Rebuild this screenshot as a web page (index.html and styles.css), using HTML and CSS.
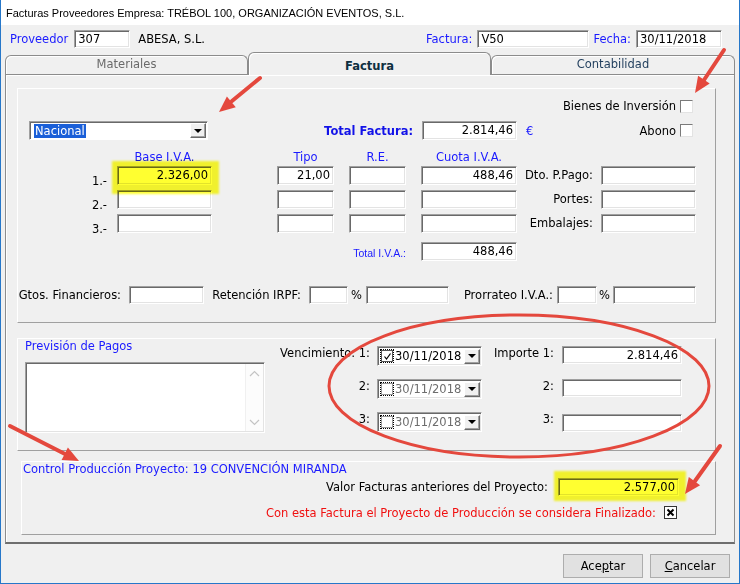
FILE: index.html
```html
<!DOCTYPE html>
<html lang="es">
<head>
    <meta charset="UTF-8">
    <title>Facturas Proveedores</title>
    <link rel="stylesheet" href="styles.css">
</head>
<body>

<div class="window">
    <div class="titlebar">Facturas Proveedores Empresa: TRÉBOL 100, ORGANIZACIÓN EVENTOS, S.L.</div>

    <div class="client">
        <!-- Cabecera: proveedor, factura, fecha -->
        <div class="head-row">
            <span class="blue">Proveedor</span>
            <div class="field f-prov">307</div>
            <span class="prov-name">ABESA, S.L.</span>
            <span class="blue push">Factura:</span>
            <div class="field f-fact">V50</div>
            <span class="blue f-fecha-l">Fecha:</span>
            <div class="field f-fecha">30/11/2018</div>
        </div>

        <!-- Pestañas -->
        <div class="tabs">
            <div class="tab t-mat">Materiales</div>
            <div class="tab active">Factura</div>
            <div class="tab t-cont">Contabilidad</div>
        </div>

        <div class="panel">
            <!-- Importes -->
            <div class="group g1">
                <div class="r-bienes">
                    <span>Bienes de Inversión</span>
                    <span class="chk"></span>
                </div>

                <div class="r-total">
                    <div class="combo">
                        <span class="sel">Nacional</span>
                        <span class="drop"><i class="tri"></i></span>
                    </div>
                    <span class="lbl-total">Total Factura:</span>
                    <div class="field h19 right tf-field">2.814,46</div>
                    <span class="euro">€</span>
                    <span class="abono">Abono</span>
                    <span class="chk"></span>
                </div>

                <div class="heads">
                    <span class="c-base">Base I.V.A.</span>
                    <span class="c-tipo">Tipo</span>
                    <span class="c-re">R.E.</span>
                    <span class="c-cuota">Cuota I.V.A.</span>
                </div>

                <div class="iva-row">
                    <span class="num">1.-</span>
                    <div class="field h19 right c-base">2.326,00</div>
                    <div class="field h19 right c-tipo">21,00</div>
                    <div class="field h19 c-re"></div>
                    <div class="field h19 right c-cuota">488,46</div>
                    <span class="side">Dto. P.Pago:</span>
                    <div class="field h19 c-side"></div>
                </div>
                <div class="iva-row">
                    <span class="num">2.-</span>
                    <div class="field h19 c-base"></div>
                    <div class="field h19 c-tipo"></div>
                    <div class="field h19 c-re"></div>
                    <div class="field h19 c-cuota"></div>
                    <span class="side">Portes:</span>
                    <div class="field h19 c-side"></div>
                </div>
                <div class="iva-row">
                    <span class="num">3.-</span>
                    <div class="field h19 c-base"></div>
                    <div class="field h19 c-tipo"></div>
                    <div class="field h19 c-re"></div>
                    <div class="field h19 c-cuota"></div>
                    <span class="side">Embalajes:</span>
                    <div class="field h19 c-side"></div>
                </div>

                <div class="r-totiva">
                    <span class="tot-iva">Total I.V.A.:</span>
                    <div class="field h19 right c-cuota">488,46</div>
                </div>

                <div class="r-gastos">
                    <span class="gf-l">Gtos. Financieros:</span>
                    <div class="field f-gf"></div>
                    <span class="irpf-l">Retención IRPF:</span>
                    <div class="field f-irpf"></div>
                    <span class="pct">%</span>
                    <div class="field f-wide"></div>
                    <span class="prorr-l">Prorrateo I.V.A.:</span>
                    <div class="field f-prorr"></div>
                    <span class="pct2">%</span>
                    <div class="field f-wide"></div>
                </div>
            </div>

            <!-- Previsión de pagos -->
            <div class="group g2">
                <div class="prev">
                    <div class="blue prev-title">Previsión de Pagos</div>
                    <div class="memo">
                        <div class="memo-bar">
                            <svg width="11" height="7" viewBox="0 0 11 7"><polyline points="1,6 5.5,1.5 10,6" fill="none" stroke="#c4c4c4" stroke-width="1.2"/></svg>
                            <svg width="11" height="7" viewBox="0 0 11 7"><polyline points="1,1 5.5,5.5 10,1" fill="none" stroke="#c4c4c4" stroke-width="1.2"/></svg>
                        </div>
                    </div>
                </div>
                <div class="venc">
                    <div class="v-row">
                        <span class="v-lbl">Vencimiento: 1:</span>
                        <div class="dtp">
                            <span class="dtp-chk">
                                <svg width="9" height="9" viewBox="0 0 9 9"><polyline points="1.5,4.5 3.5,7 7.5,1.5" fill="none" stroke="#000" stroke-width="1.2"/></svg>
                            </span>
                            <span class="dtp-val">30/11/2018</span>
                            <span class="drop"><i class="tri"></i></span>
                        </div>
                        <span class="i-lbl">Importe 1:</span>
                        <div class="field right f-imp">2.814,46</div>
                    </div>
                    <div class="v-row">
                        <span class="v-lbl">2:</span>
                        <div class="dtp off">
                            <span class="dtp-chk"></span>
                            <span class="dtp-val">30/11/2018</span>
                            <span class="drop"><i class="tri"></i></span>
                        </div>
                        <span class="i-lbl">2:</span>
                        <div class="field f-imp"></div>
                    </div>
                    <div class="v-row">
                        <span class="v-lbl">3:</span>
                        <div class="dtp off">
                            <span class="dtp-chk"></span>
                            <span class="dtp-val">30/11/2018</span>
                            <span class="drop"><i class="tri"></i></span>
                        </div>
                        <span class="i-lbl">3:</span>
                        <div class="field f-imp low"></div>
                    </div>
                </div>
            </div>

            <!-- Control de producción -->
            <div class="group g3">
                <div class="blue g3-title">Control Producción Proyecto: 19 CONVENCIÓN MIRANDA</div>
                <div class="r-valor">
                    <span>Valor Facturas anteriores del Proyecto:</span>
                    <div class="field right f-valor">2.577,00</div>
                </div>
                <div class="r-fin">
                    <span class="red">Con esta Factura el Proyecto de Producción se considera Finalizado:</span>
                    <span class="chk-x">
                        <svg width="9" height="9" viewBox="0 0 9 9"><path d="M1.5 1.5 L7.5 7.5 M7.5 1.5 L1.5 7.5" stroke="#000" stroke-width="2"/></svg>
                    </span>
                </div>
            </div>
        </div>

        <div class="buttons">
            <button class="btn">Ace<u>p</u>tar</button>
            <button class="btn"><u>C</u>ancelar</button>
        </div>
    </div>

    <!-- Marcas del pantallazo -->
    <div class="hl hl-base"></div>
    <div class="hl hl-valor"></div>
    <svg class="marks" width="740" height="584" viewBox="0 0 740 584">
        <ellipse cx="518" cy="386" rx="190" ry="71" fill="none" stroke="#e4483d" stroke-width="3"/>
        <g stroke="#e4483d" stroke-width="4" stroke-linecap="round" fill="#e4483d">
            <line x1="259" y1="78" x2="231" y2="101"/>
            <polygon points="218,112 225.9,96.4 234.8,107.2" stroke="none"/>
            <line x1="723" y1="50" x2="703" y2="80"/>
            <polygon points="694,93 697.1,75.8 708.7,83.6" stroke="none"/>
            <line x1="9" y1="426" x2="64" y2="454"/>
            <polygon points="78,461 60.6,460 66.9,447.6" stroke="none"/>
            <line x1="719" y1="446" x2="694" y2="481"/>
            <polygon points="684,494 687.8,477 699.1,485.2" stroke="none"/>
        </g>
    </svg>
</div>

</body>
</html>
```

FILE: styles.css
```css
* {
    box-sizing: border-box;
}

body {
    margin: 0;
    background: #ffffff;
    font-family: "DejaVu Sans", Verdana, sans-serif;
    font-size: 11.5px;
    color: #000;
}

.window {
    position: relative;
    width: 740px;
    height: 584px;
    border: 1px solid #2677c9;
    border-top: 0;
    background: #f0f0f0;
}

.titlebar {
    height: 25px;
    background: #fff;
    padding-left: 5px;
    line-height: 26px;
    font-family: "Liberation Sans", Arial, sans-serif;
    font-size: 11px;
}

.blue {
    color: #1a1aff;
}

.red {
    color: #f01010;
}

/* campos tipo Windows clásico */
.field {
    height: 18px;
    background: #fff;
    border: 1px solid;
    border-color: #a0a0a0 #fff #fff #a0a0a0;
    box-shadow: inset 1px 1px 0 #696969, inset -1px -1px 0 #e3e3e3;
    padding: 0 3px;
    line-height: 16px;
    white-space: nowrap;
    overflow: hidden;
}

.field.h19 {
    height: 19px;
    line-height: 17px;
}

.field.right {
    text-align: right;
}

.chk {
    width: 13px;
    height: 13px;
    background: #fff;
    border: 1px solid;
    border-color: #7a7a7a #e3e3e3 #e3e3e3 #7a7a7a;
}

.drop {
    margin-left: auto;
    width: 16px;
    height: 15px;
    background: #f0f0f0;
    border: 1px solid;
    border-color: #fff #696969 #696969 #fff;
    box-shadow: inset -1px -1px 0 #a0a0a0;
    display: flex;
    align-items: center;
    justify-content: center;
}

.tri {
    width: 0;
    height: 0;
    border-left: 4px solid transparent;
    border-right: 4px solid transparent;
    border-top: 4px solid #000;
}

/* cabecera */
.head-row {
    display: flex;
    align-items: center;
    height: 18px;
    margin-top: 5px;
    padding: 0 17px 0 9px;
}

.f-prov {
    width: 56px;
    margin-left: 6px;
}

.prov-name {
    margin-left: 8px;
}

.push {
    margin-left: auto;
}

.f-fact {
    width: 112px;
    margin-left: 5px;
}

.f-fecha-l {
    margin-left: 4px;
}

.f-fecha {
    width: 86px;
    margin-left: 5px;
}

/* pestañas */
.tabs {
    display: flex;
    align-items: flex-end;
    height: 22px;
    margin-top: 4px;
    padding-left: 4px;
}

.tab {
    height: 19px;
    border: 1px solid #8c8c8c;
    border-bottom: 0;
    border-radius: 6px 6px 0 0;
    background: #f0f0f0;
    box-shadow: inset 1px 1px 0 #fff;
    text-align: center;
    line-height: 17px;
}

.t-mat {
    width: 243px;
    color: #6a6a6a;
}

.t-cont {
    width: 244px;
    color: #1f3d5c;
}

.tab.active {
    position: relative;
    z-index: 1;
    width: 243px;
    height: 23px;
    margin-bottom: -1px;
    padding-top: 3px;
    line-height: 21px;
    font-weight: bold;
    color: #0e2f40;
}

.panel {
    width: 730px;
    height: 470px;
    margin-left: 4px;
    border: 1px solid #8c8c8c;
    border-bottom: 2px solid #6e6e6e;
    box-shadow: inset 1px 1px 0 #fff;
    padding: 13px 18px 0 11px;
}

.group {
    border: 1px solid;
    border-color: #fff #a0a0a0 #a0a0a0 #fff;
}

/* grupo importes */
.g1 {
    height: 235px;
}

.r-bienes {
    display: flex;
    align-items: center;
    justify-content: flex-end;
    height: 16px;
    margin-top: 9px;
    padding-right: 22px;
}

.r-bienes .chk {
    margin-left: 4px;
}

.r-total {
    display: flex;
    align-items: center;
    height: 21px;
    margin-top: 6px;
    padding-right: 22px;
}

.combo {
    display: flex;
    align-items: center;
    width: 179px;
    height: 19px;
    margin-left: 11px;
    background: #fff;
    border: 1px solid;
    border-color: #a0a0a0 #fff #fff #a0a0a0;
    box-shadow: inset 1px 1px 0 #696969;
    padding: 0 1px 0 4px;
}

.sel {
    background: #1a5fd8;
    color: #fff;
    padding: 0 1px;
    line-height: 14px;
}

.lbl-total {
    width: 205px;
    text-align: right;
    font-weight: bold;
    color: #1212e8;
}

.tf-field {
    width: 95px;
    margin-left: 9px;
}

.euro {
    margin-left: 9px;
    color: #1a1aff;
}

.abono {
    margin-left: auto;
}

.r-total .chk {
    margin-left: 4px;
}

.heads {
    display: flex;
    height: 14px;
    margin-top: 9px;
    padding-left: 89px;
    line-height: 14px;
    color: #1a1aff;
    text-align: center;
}

.c-base {
    width: 95px;
    margin-left: 10px;
}

.c-tipo {
    width: 57px;
    margin-left: 65px;
}

.c-re {
    width: 57px;
    margin-left: 15px;
}

.c-cuota {
    width: 96px;
    margin-left: 15px;
}

.iva-row {
    display: flex;
    align-items: flex-start;
    height: 19px;
    margin-top: 5px;
}

.heads + .iva-row {
    margin-top: 2px;
}

.num {
    width: 89px;
    text-align: right;
    margin-top: 9px;
    line-height: 13px;
}

.side {
    width: 76px;
    text-align: right;
    line-height: 19px;
}

.c-side {
    width: 95px;
    margin-left: 8px;
}

.r-totiva {
    display: flex;
    align-items: center;
    height: 19px;
    margin-top: 9px;
}

.tot-iva {
    width: 388px;
    text-align: right;
    padding-top: 3px;
    font-family: "Liberation Sans", Arial, sans-serif;
    font-size: 10.5px;
    color: #1a1aff;
}

.r-gastos {
    display: flex;
    align-items: center;
    height: 18px;
    margin-top: 25px;
}

.gf-l {
    width: 103px;
    text-align: right;
}

.f-gf {
    width: 75px;
    margin-left: 8px;
}

.irpf-l {
    width: 97px;
    text-align: right;
}

.f-irpf {
    width: 39px;
    margin-left: 8px;
}

.pct {
    width: 15px;
    margin-left: 3px;
}

.f-wide {
    width: 83px;
}

.prorr-l {
    width: 104px;
    text-align: right;
}

.f-prorr {
    width: 40px;
    margin-left: 4px;
}

.pct2 {
    width: 14px;
    margin-left: 2px;
}

/* previsión de pagos */
.g2 {
    display: flex;
    height: 113px;
    margin-top: 15px;
}

.prev {
    width: 247px;
    padding-left: 7px;
}

.prev-title {
    line-height: 14px;
}

.memo {
    display: flex;
    justify-content: flex-end;
    width: 240px;
    height: 71px;
    margin-top: 9px;
    background: #fff;
    border: 1px solid;
    border-color: #a0a0a0 #fff #fff #a0a0a0;
    box-shadow: inset 1px 1px 0 #696969, inset -1px -1px 0 #e3e3e3;
}

.memo-bar {
    display: flex;
    flex-direction: column;
    justify-content: space-between;
    align-items: center;
    width: 18px;
    margin: 1px 1px 1px 0;
    padding: 6px 0 5px;
    background: #fcfcfc;
    border-left: 1px solid #f0f0f0;
}

.venc {
    padding-top: 7px;
}

.v-row {
    display: flex;
    align-items: flex-start;
    height: 21px;
    margin-bottom: 12px;
}

.v-lbl {
    width: 105px;
    text-align: right;
    padding-top: 1px;
    line-height: 13px;
}

.dtp {
    display: flex;
    align-items: center;
    width: 105px;
    height: 20px;
    margin-left: 7px;
    background: #fff;
    border: 1px solid;
    border-color: #a0a0a0 #fff #fff #a0a0a0;
    box-shadow: inset 1px 1px 0 #696969, inset -1px -1px 0 #e3e3e3;
    padding: 0 1px 0 3px;
}

.dtp-chk {
    display: flex;
    align-items: center;
    justify-content: center;
    width: 12px;
    height: 12px;
    border: 1px solid #555;
    outline: 1px dotted #000;
}

.dtp.off .dtp-chk {
    border-color: #9a9a9a;
}

.dtp-val {
    margin-left: 2px;
}

.dtp.off .dtp-val {
    color: #6d6d6d;
}

.i-lbl {
    width: 72px;
    text-align: right;
    padding-top: 1px;
    line-height: 13px;
}

.f-imp {
    width: 120px;
    margin-left: 8px;
}

.f-imp.low {
    margin-top: 2px;
}

/* control producción */
.g3 {
    height: 74px;
    margin-top: 10px;
    margin-left: 4px;
}

.g3-title {
    padding-left: 1px;
    line-height: 14px;
}

.r-valor {
    display: flex;
    align-items: center;
    justify-content: flex-end;
    height: 18px;
    margin-top: 2px;
    padding-right: 36px;
}

.f-valor {
    width: 121px;
    margin-left: 10px;
}

.r-fin {
    display: flex;
    align-items: center;
    justify-content: flex-end;
    height: 13px;
    margin-top: 10px;
    padding-right: 38px;
}

.chk-x {
    display: flex;
    align-items: center;
    justify-content: center;
    width: 13px;
    height: 13px;
    margin-left: 8px;
    background: #fff;
    border: 1px solid #333;
}

/* botones */
.buttons {
    display: flex;
    justify-content: flex-end;
    gap: 7px;
    margin-top: 10px;
    padding-right: 9px;
}

.btn {
    width: 80px;
    height: 24px;
    border: 1px solid #adadad;
    background: #e1e1e1;
    font-family: "DejaVu Sans", Verdana, sans-serif;
    font-size: 11.5px;
    color: #000;
    padding: 0;
}

/* marcas del pantallazo */
.hl {
    position: absolute;
    background: #ffff30;
    mix-blend-mode: multiply;
    filter: blur(1px);
}

.hl-base {
    left: 111px;
    top: 161px;
    width: 107px;
    height: 33px;
}

.hl-valor {
    left: 553px;
    top: 471px;
    width: 132px;
    height: 30px;
}

.marks {
    position: absolute;
    left: 0;
    top: 0;
    pointer-events: none;
}
```
